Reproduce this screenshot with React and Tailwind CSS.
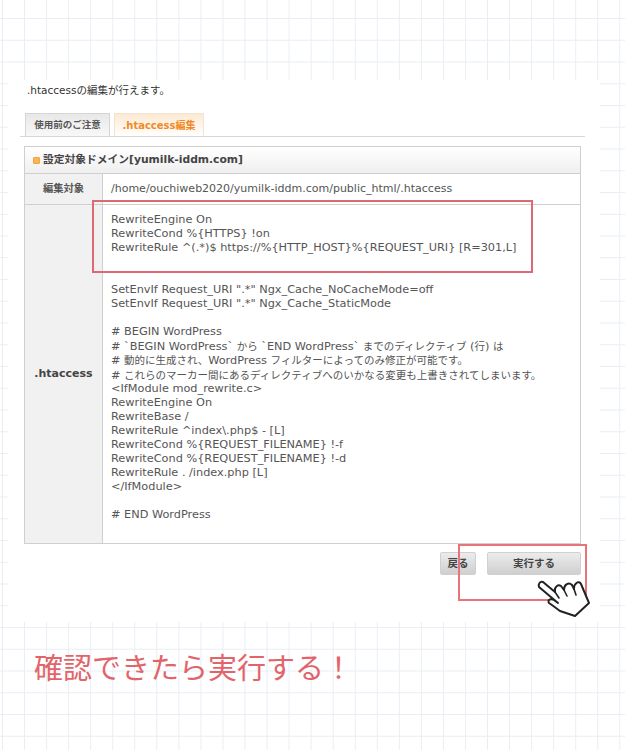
const cjk = "font-['DejaVu_Sans','Noto_Sans_CJK_JP',sans-serif]";

const code = `RewriteEngine On
RewriteCond %{HTTPS} !on
RewriteRule ^(.*)$ https://%{HTTP_HOST}%{REQUEST_URI} [R=301,L]


SetEnvIf Request_URI ".*" Ngx_Cache_NoCacheMode=off
SetEnvIf Request_URI ".*" Ngx_Cache_StaticMode

# BEGIN WordPress
# \`BEGIN WordPress\` から \`END WordPress\` までのディレクティブ (行) は
# 動的に生成され、WordPress フィルターによってのみ修正が可能です。
# これらのマーカー間にあるディレクティブへのいかなる変更も上書きされてしまいます。
<IfModule mod_rewrite.c>
RewriteEngine On
RewriteBase /
RewriteRule ^index\\.php$ - [L]
RewriteCond %{REQUEST_FILENAME} !-f
RewriteCond %{REQUEST_FILENAME} !-d
RewriteRule . /index.php [L]
</IfModule>

# END WordPress`;

// latin runs in the file are a touch larger than the japanese ones
const codeLines = code.split('\n').map((line) => line.split(/([\u3000-\u9fff\uff00-\uffef]+)/));

const Hand = () => (
  <svg viewBox="0 0 60 52" className="absolute left-[534px] top-[572px] h-[52px] w-[60px]">
    <path
      d="M5 15C4 12 6 9 9 10L21 20C20 15 24 12 27 14L30 18C30 12 35 10 38 13L40 17C40 11 45 8 47 12L55 31L41 44L26 39C22 36 18 33 15 31C13 28 17 26 20 28L24 31Z"
      fill="white"
      stroke="#222"
      strokeWidth="2"
      strokeLinejoin="round"
    />
    <path d="M21 20L25 26M30 18L33 24M40 17L42 23" fill="none" stroke="#222" strokeWidth="1.6" strokeLinecap="round" />
  </svg>
);

export default function App() {
  return (
    <div className={`relative h-[750px] w-[625px] overflow-hidden bg-white bg-[linear-gradient(to_right,#e8eef4_1px,transparent_1px),linear-gradient(to_bottom,#e8eef4_1px,transparent_1px)] bg-[size:22.05px_21.75px] bg-[position:2px_18px] ${cjk}`}>
      <div className="relative ml-2 mt-20 h-[542px] w-[592px] bg-white pl-4 pt-[3px] text-[10.5px] text-[#444]">
        <p className="ml-[3px] h-[30px] leading-[14px] text-[#333]">.htaccessの編集が行えます。</p>

        {/* Tabs */}
        <div className="-ml-1 flex h-[24px] w-[565px] items-end gap-1 border-b border-[#d8d8d8] pl-[5px]">
          <div className="flex h-[23px] w-[85px] items-center justify-center border border-b-0 border-[#d5d5d5] bg-gradient-to-b from-[#e8e8e8] to-[#f8f8f8] text-[9.5px] font-bold text-[#555]">
            使用前のご注意
          </div>
          <div className="flex h-[23px] w-[90px] items-center justify-center border border-b-0 border-[#f0e4d4] bg-gradient-to-b from-[#fde9d2] to-white text-[10px] font-bold text-[#f08a24]">
            .htaccess編集
          </div>
        </div>

        {/* Settings table */}
        <div className="mt-[9px] w-[557px] border border-[#cfcfcf]">
          <div className="flex h-[27px] items-center gap-[3px] border-b border-[#cfcfcf] bg-gradient-to-b from-white to-[#efefef] pl-2 text-[10.75px] font-bold text-[#444]">
            <span className="h-[7px] w-[7px] rounded-[1px] border border-[#f3a53f] bg-[#f9b455]" />
            設定対象ドメイン[yumilk-iddm.com]
          </div>
          <div className="flex h-[31px] border-b border-[#cfcfcf]">
            <div className="flex w-[78px] items-center justify-center border-r border-[#cfcfcf] bg-[#f1f1f1] text-[10.25px] font-bold text-[#555]">編集対象</div>
            <div className="flex items-center pl-2 text-[11px] text-[#555]">/home/ouchiweb2020/yumilk-iddm.com/public_html/.htaccess</div>
          </div>
          <div className="flex h-[338px]">
            <div className="flex w-[78px] items-center justify-center border-r border-[#cfcfcf] bg-[#f1f1f1] text-[11px] font-bold text-[#444]">.htaccess</div>
            <div className="pl-2 pt-2 text-[11.3px] text-[#555]">
              {codeLines.map((parts, n) => (
                <div key={n} className="h-[14.05px] whitespace-pre leading-[14px]">
                  {parts.map((part, i) => (i % 2 ? <span key={i} className="text-[10.5px] leading-[14px]">{part}</span> : part))}
                </div>
              ))}
            </div>
          </div>
        </div>

        {/* Buttons */}
        <div className="mt-2 flex w-[557px] justify-end gap-[11px]">
          <button className="h-[23px] w-[36px] rounded-[2px] border border-[#d0d0d0] bg-gradient-to-b from-[#ececec] to-[#cfcfcf] text-[10.5px] font-bold text-[#444]">戻る</button>
          <button className="h-[23px] w-[94px] rounded-[2px] border border-[#d0d0d0] bg-gradient-to-b from-[#ececec] to-[#cfcfcf] text-[10.5px] font-bold text-[#444]">実行する</button>
        </div>
      </div>

      {/* Red annotations over the screenshot */}
      <div className="absolute left-[92px] top-[200px] h-[73px] w-[441px] border-2 border-[#dd6a72]" />
      <div className="absolute left-[458px] top-[544px] h-[57px] w-[129px] border-2 border-[#e8747a]" />
      <Hand />

      <p className="absolute left-[34px] top-[647px] font-['Noto_Sans_CJK_JP',sans-serif] text-[29px] leading-[38px] text-[#e2646a]">確認できたら実行する！</p>
    </div>
  );
}
